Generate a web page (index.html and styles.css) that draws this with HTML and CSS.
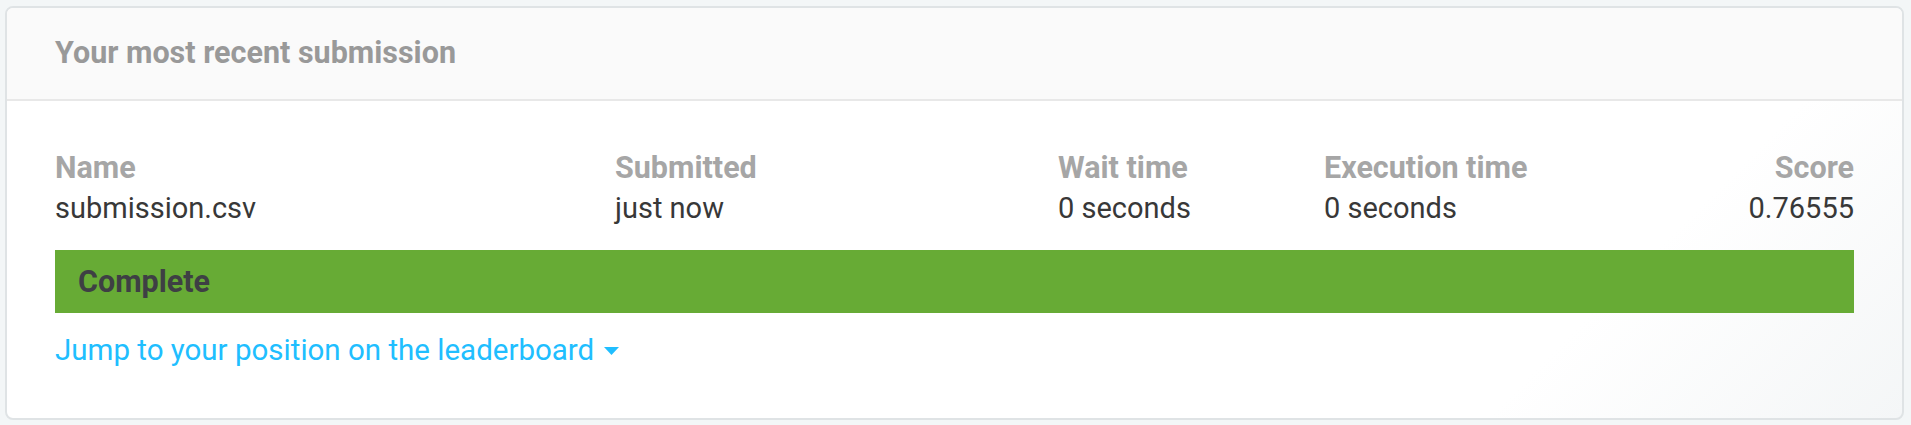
FILE: index.html
```html
<!DOCTYPE html>
<html lang="en">
<head>
<meta charset="utf-8">
<title>Your most recent submission</title>
<link rel="stylesheet" href="styles.css">
</head>
<body>
<section class="card">
  <header class="card-header">Your most recent submission</header>
  <div class="card-body">
    <div class="stats">
      <div class="stat col-name">
        <div class="label">Name</div>
        <div class="value">submission.csv</div>
      </div>
      <div class="stat col-submitted">
        <div class="label">Submitted</div>
        <div class="value">just now</div>
      </div>
      <div class="stat col-wait">
        <div class="label">Wait time</div>
        <div class="value">0 seconds</div>
      </div>
      <div class="stat col-exec">
        <div class="label">Execution time</div>
        <div class="value">0 seconds</div>
      </div>
      <div class="stat col-score">
        <div class="label">Score</div>
        <div class="value">0.76555</div>
      </div>
    </div>
    <div class="status">Complete</div>
    <a class="jump" href="#">Jump to your position on the leaderboard<svg class="caret" width="15" height="8" viewBox="0 0 15 8"><path d="M0 0 H15 L7.5 8 Z" fill="currentColor"/></svg></a>
  </div>
</section>
</body>
</html>
```

FILE: styles.css
```css
html, body {
  margin: 0;
  padding: 0;
}
body {
  background: #f3f6f7;
  font-family: Roboto, "Liberation Sans", sans-serif;
  padding: 6px 7px 6px 5px;
  height: 425px;
  box-sizing: border-box;
}
.card {
  border: 2px solid #dfe3e5;
  border-radius: 8px;
  background: linear-gradient(135deg, #ffffff 82%, #f4f6f7 100%);
  overflow: hidden;
}
.card-header {
  background: #fafafa;
  border-bottom: 2px solid #e8e8e8;
  padding: 25px 48px 27px 48px;
  font-size: 30.5px;
  line-height: 39px;
  font-weight: 700;
  color: #999999;
}
.card-body {
  padding: 47px 48px 48px 48px;
}
.stats {
  display: grid;
  grid-template-columns: 560px 443px 266px 1fr auto;
}
.col-score {
  text-align: right;
}
.label {
  font-size: 30.5px;
  line-height: 40px;
  font-weight: 700;
  color: #a6a6a6;
}
.value {
  font-size: 29px;
  line-height: 40px;
  color: #383838;
}
.status {
  margin-top: 22px;
  height: 63px;
  background: #67ab35;
  color: #3e3f44;
  font-size: 30.5px;
  font-weight: 700;
  line-height: 63px;
  padding: 0 23px;
}
.jump {
  display: inline-flex;
  align-items: center;
  margin-top: 17px;
  font-size: 29.5px;
  line-height: 40px;
  color: #20beff;
  text-decoration: none;
}
.caret {
  margin-left: 10px;
  margin-top: 2px;
}
```
